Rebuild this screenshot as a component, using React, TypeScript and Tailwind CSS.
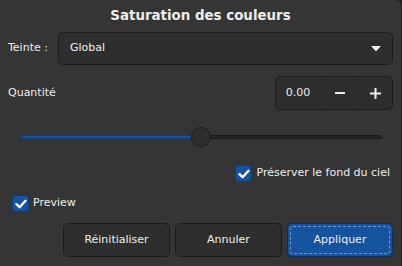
import React from "react"

const font = { fontFamily: '"DejaVu Sans", sans-serif' }

function Check() {
  return (
    <span className="flex h-[17px] w-[17px] items-center justify-center rounded-[3px] border border-[#0f3b71] bg-[#15539e]">
      <svg width="12" height="10" viewBox="0 0 12 10">
        <path d="M1.5 5.2 L4.6 8.2 L10.5 1.8" fill="none" stroke="#ffffff" strokeWidth="2.4" strokeLinecap="round" strokeLinejoin="round" />
      </svg>
    </span>
  )
}

export default function App() {
  return (
    <div className="w-[402px] h-[266px] bg-[#232323] select-none" style={font}>
      <div className="flex h-full flex-col rounded-tr-[7px] border-r border-[#1f1f1f] bg-[#353535] pl-[8px] pr-[8px] text-[11px] text-[#eeeeec]">
        {/* Title */}
        <div className="flex h-[32px] items-center justify-center text-[13.4px] font-bold">
          Saturation des couleurs
        </div>

        {/* Teinte */}
        <div className="flex items-center">
          <span className="w-[50px]">Teinte :</span>
          <div className="flex h-[33px] flex-1 items-center justify-between rounded-[5px] border border-[#1c1c1c] bg-[#2e2e2e] pl-[11px] pr-[11px]">
            <span>Global</span>
            <svg width="10" height="6" viewBox="0 0 10 6">
              <path d="M0 0 H10 L5 5.5 Z" fill="#eeeeec" />
            </svg>
          </div>
        </div>

        {/* Quantité */}
        <div className="mt-[11px] flex items-center justify-between">
          <span>Quantité</span>
          <div className="flex h-[34px] w-[118px] rounded-[5px] border border-[#1c1c1c] bg-[#2e2e2e]">
            <div className="flex w-[46px] items-center justify-center pr-[2px]">0.00</div>
            <div className="flex w-[35px] items-center justify-center border-l border-[#262626]">
              <svg width="10" height="10" viewBox="0 0 10 10">
                <path d="M0 5 H10" stroke="#eeeeec" strokeWidth="2" />
              </svg>
            </div>
            <div className="flex flex-1 items-center justify-center border-l border-[#262626]">
              <svg width="11" height="11" viewBox="0 0 11 11">
                <path d="M0 5.5 H11 M5.5 0 V11" stroke="#eeeeec" strokeWidth="2" />
              </svg>
            </div>
          </div>
        </div>

        {/* Slider */}
        <div className="mt-[16px] flex h-[22px] items-center pl-[12px] pr-[11px]">
          <div className="h-[4px] w-[172px] rounded-l-full border border-[#0f3b71] bg-[#15539e]" />
          <div className="-mx-[1px] h-[20px] w-[20px] shrink-0 rounded-full border border-[#1a1a1a] bg-[#2e2e2e]" />
          <div className="h-[4px] flex-1 rounded-r-full border border-[#1c1c1c] bg-[#262626]" />
        </div>

        {/* Préserver */}
        <div className="mt-[17px] flex items-center justify-end gap-[4px] pr-[3px]">
          <Check />
          <span>Préserver le fond du ciel</span>
        </div>

        {/* Preview */}
        <div className="mt-[13px] flex items-center gap-[4px] pl-[4px]">
          <Check />
          <span>Preview</span>
        </div>

        {/* Buttons */}
        <div className="mt-[11px] flex justify-end gap-[5px]">
          <button className="h-[34px] w-[107px] rounded-[5px] border border-[#1c1c1c] bg-[#2e2e2e]">Réinitialiser</button>
          <button className="h-[34px] w-[107px] rounded-[5px] border border-[#1c1c1c] bg-[#2e2e2e]">Annuler</button>
          <button className="h-[34px] w-[106px] rounded-[5px] border border-[#0b2e58] bg-[#15539e] p-[2px]">
            <span className="flex h-full w-full items-center justify-center rounded-[3px] border border-dashed border-[#6f9bd4]">
              Appliquer
            </span>
          </button>
        </div>
      </div>
    </div>
  )
}
